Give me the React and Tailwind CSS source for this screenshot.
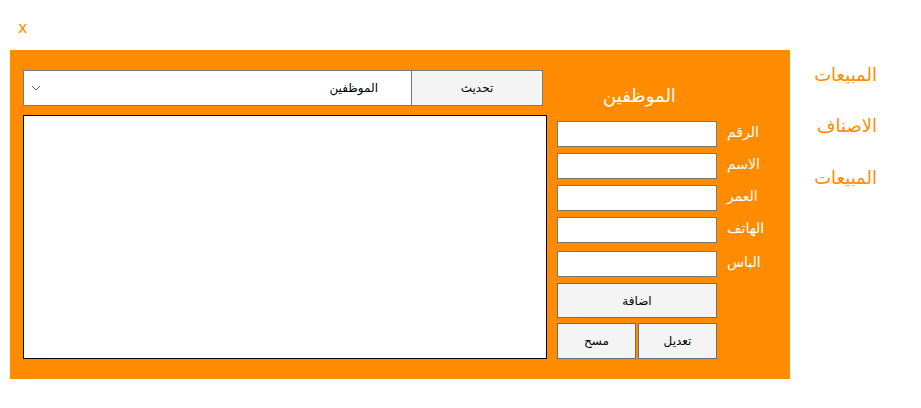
const fields = [
  { label: "الرقم", mt: "mt-0" },
  { label: "الاسم", mt: "mt-[6px]" },
  { label: "العمر", mt: "mt-[6px]" },
  { label: "الهاتف", mt: "mt-[6px]" },
  { label: "الباس", mt: "mt-[8px]" },
];

const navItems = [
  { label: "المبيعات", mt: "mt-[13px]" },
  { label: "الاصناف", mt: "mt-[27px]" },
  { label: "المبيعات", mt: "mt-[28px]" },
];

export default function App() {
  return (
    <div className="w-[921px] h-[408px] bg-white font-['DejaVu_Sans',sans-serif] overflow-hidden">
      {/* close */}
      <div className="h-[50px] pl-[18px] pt-[16px]">
        <span className="text-[#ff8c00] text-[16px] leading-[20px]">x</span>
      </div>

      <div className="flex">
        {/* main panel */}
        <div className="ml-[10px] w-[780px] h-[329px] bg-[#ff8c00] flex pt-[20px] pl-[13px]">
          {/* left column */}
          <div className="w-[524px] flex flex-col">
            <div className="flex h-[36px]">
              <div className="w-[389px] h-full bg-white border border-[#7a7a7a] flex items-center justify-between px-[6px]">
                <svg width="10" height="6" viewBox="0 0 10 6" className="ml-[1px]">
                  <path d="M1 1 L5 5 L9 1" fill="none" stroke="#555" strokeWidth="1" />
                </svg>
                <span dir="rtl" className="text-[12px] text-black pr-[27px]">الموظفين</span>
              </div>
              <button className="w-[131px] h-full bg-[#f4f4f4] border border-l-0 border-[#7a7a7a] text-[12px] text-black">
                تحديث
              </button>
            </div>
            <div className="mt-[9px] h-[244px] bg-white border border-black" />
          </div>

          {/* right column */}
          <div className="ml-[10px] w-[225px] flex flex-col">
            <div className="h-[51px] flex items-start justify-center pt-[14px] pr-[60px]">
              <span dir="rtl" className="text-white text-[18px] leading-[24px]">الموظفين</span>
            </div>
            {fields.map((f) => (
              <div key={f.label + f.mt} className={`flex items-start ${f.mt}`}>
                <div className="w-[160px] h-[26px] bg-white border border-[#7a7a7a]" />
                <span dir="rtl" className="ml-[10px] mt-[1px] text-white text-[14px] leading-[20px]">{f.label}</span>
              </div>
            ))}
            <button className="mt-[6px] w-[160px] h-[35px] bg-[#f4f4f4] border border-[#6e6e6e] text-[12px] text-black">
              اضافة
            </button>
            <div className="mt-[5px] flex gap-[2px] w-[160px]">
              <button className="w-[79px] h-[36px] bg-[#f4f4f4] border border-[#6e6e6e] text-[12px] text-black">
                مسح
              </button>
              <button className="w-[79px] h-[36px] bg-[#f4f4f4] border border-[#6e6e6e] text-[12px] text-black">
                تعديل
              </button>
            </div>
          </div>
        </div>

        {/* side nav */}
        <div className="w-[87px] flex flex-col items-end">
          {navItems.map((n, i) => (
            <span key={i} dir="rtl" className={`${n.mt} text-[#ff8c00] text-[18px] leading-[24px]`}>
              {n.label}
            </span>
          ))}
        </div>
      </div>
    </div>
  );
}
